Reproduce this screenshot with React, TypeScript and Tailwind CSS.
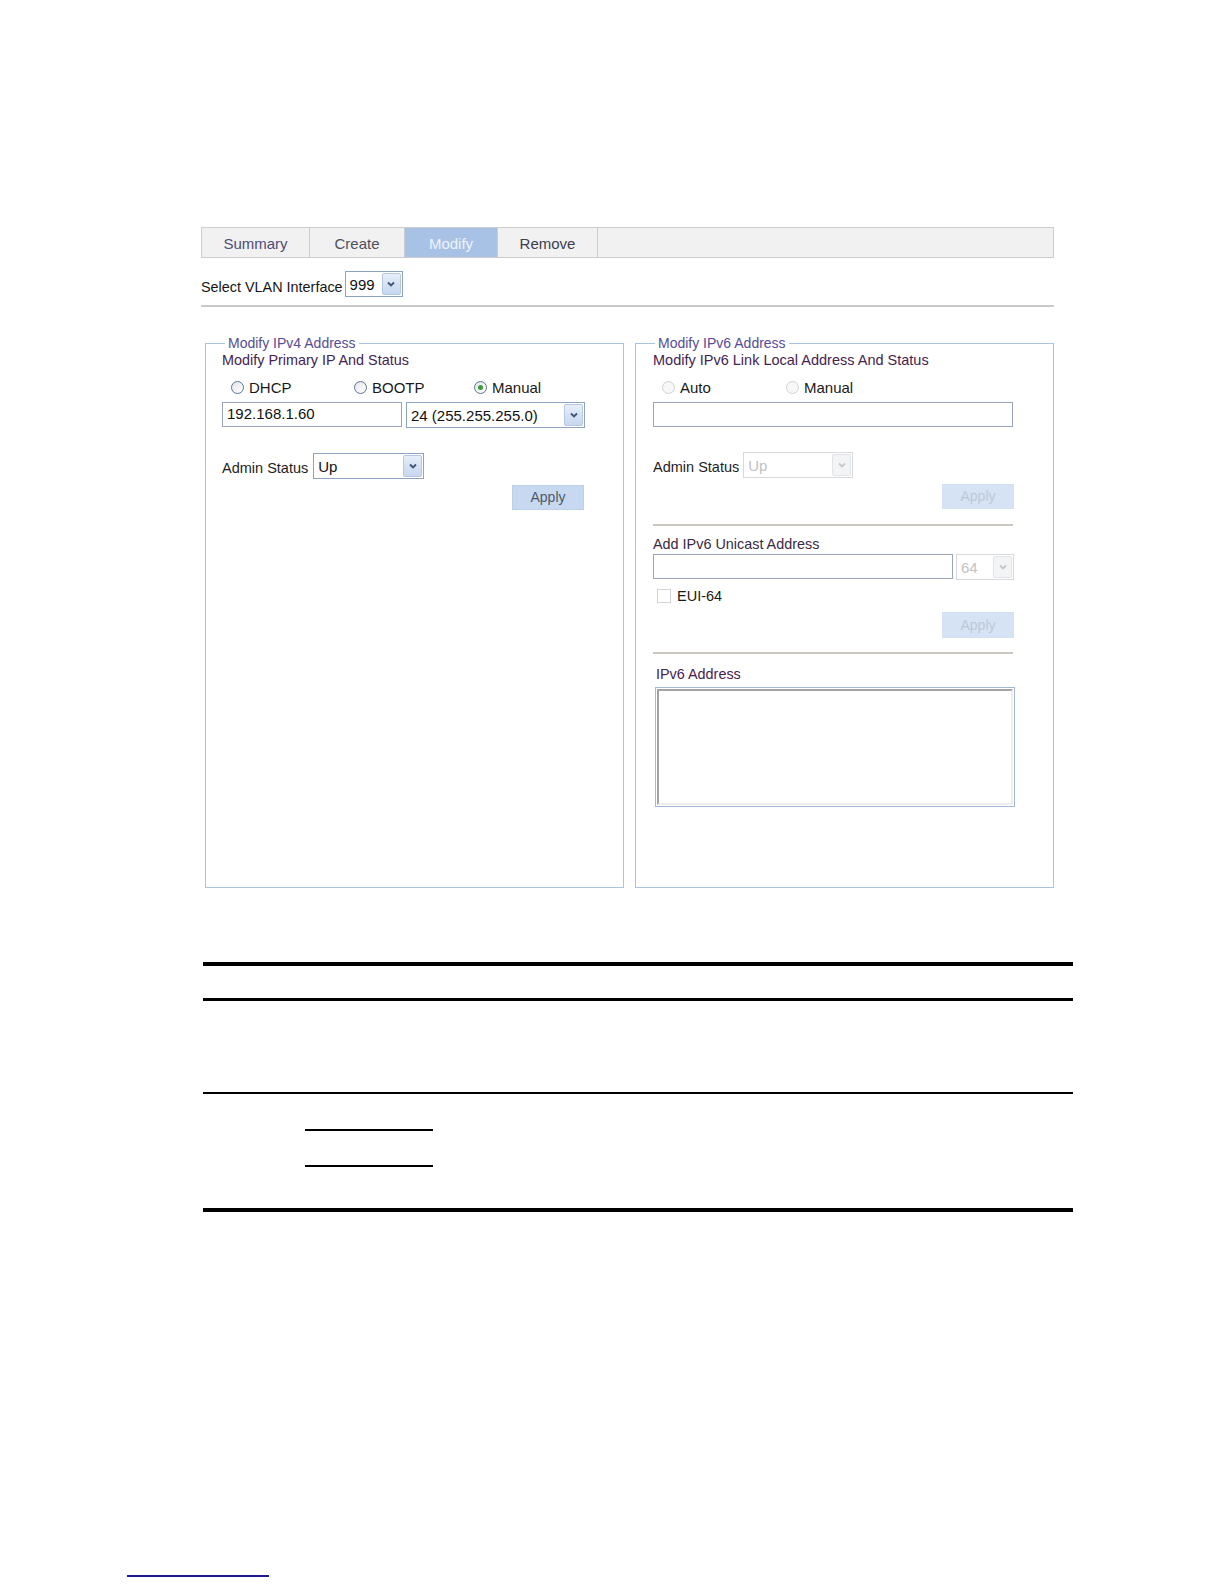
import React from "react";

const font = "font-['Liberation_Sans',Arial,sans-serif]";

const Chevron = ({ disabled }: { disabled?: boolean }) => (
  <svg width="10" height="8" viewBox="0 0 10 8">
    <path
      d="M2 2.5 L5 5.5 L8 2.5"
      fill="none"
      stroke={disabled ? "#c4c8ce" : "#3f5478"}
      strokeWidth="1.9"
    />
  </svg>
);

// select box with the little blue arrow button on the right
const SelectBox = ({
  value,
  className,
  disabled,
}: {
  value: string;
  className: string;
  disabled?: boolean;
}) => (
  <div
    className={`flex h-[26px] items-stretch border bg-white ${className} ${
      disabled ? "border-[#d6d9de] text-[#c2c2c2]" : "border-[#8ea3bf] text-[#111]"
    }`}
  >
    <span className="flex flex-1 items-center pl-[4px] text-[15px] leading-none">{value}</span>
    <span
      className={`m-[1px] flex w-[19px] items-center justify-center rounded-[2px] border ${
        disabled
          ? "border-[#e2e4e8] bg-[#f3f4f6]"
          : "border-[#b6c8e2] bg-gradient-to-b from-[#e6eef9] to-[#c6d7ef]"
      }`}
    >
      <Chevron disabled={disabled} />
    </span>
  </div>
);

const Radio = ({
  label,
  checked,
  disabled,
  className,
}: {
  label: string;
  checked?: boolean;
  disabled?: boolean;
  className?: string;
}) => (
  <div className={`flex items-center ${className ?? ""}`}>
    <span
      className={`flex h-[13px] w-[13px] items-center justify-center rounded-full border ${
        disabled
          ? "border-[#cfd3d8] bg-[#f7f7f7]"
          : "border-[#5f7290] bg-gradient-to-br from-[#e2e6ea] to-white"
      }`}
    >
      {checked && <span className="h-[5px] w-[5px] rounded-full bg-[#3c9c3c]" />}
    </span>
    <span className="ml-[5px] text-[15px] leading-none text-[#1a1a1a]">{label}</span>
  </div>
);

const ApplyButton = ({ disabled, className }: { disabled?: boolean; className?: string }) => (
  <div
    className={`flex w-[72px] items-center justify-center border text-[14px] ${
      disabled
        ? "border-[#d3e0f0] bg-[#d6e3f4] text-[#bcc8d9]"
        : "border-[#bcd0ea] bg-[#c7d9f0] text-[#4e5a6a]"
    } ${className ?? ""}`}
  >
    Apply
  </div>
);

const TextInput = ({ value, className }: { value?: string; className: string }) => (
  <div
    className={`flex h-[25px] items-center border border-[#9aa5b3] bg-white pl-[4px] text-[15px] text-[#111] ${className}`}
  >
    {value}
  </div>
);

const tabs = [
  { label: "Summary", w: "w-[108px]", color: "text-[#4d4d78]" },
  { label: "Create", w: "w-[95px]", color: "text-[#4f4f5f]" },
  { label: "Modify", w: "w-[93px]", color: "text-[#eef3fa]", active: true },
  { label: "Remove", w: "w-[100px]", color: "text-[#3e3e4e]" },
];

export default function App() {
  return (
    <div className={`min-h-[1584px] w-[1224px] bg-white ${font}`}>
      <div className="ml-[201px] w-[853px] pt-[227px]">
        {/* tab strip */}
        <div className="flex h-[31px] border border-[#cdcdcd] bg-[#f1f1f1]">
          {tabs.map((t) => (
            <div
              key={t.label}
              className={`flex items-center justify-center border-r border-[#cdcdcd] pt-[3px] text-[15px] ${t.w} ${t.color} ${
                t.active ? "bg-[#a8c2e6]" : ""
              }`}
            >
              {t.label}
            </div>
          ))}
        </div>

        <div className="mt-[13px] flex h-[26px] items-center">
          <span className="pt-[6px] text-[14.4px] leading-[17px] text-[#161616]">Select VLAN Interface</span>
          <SelectBox value="999" className="ml-[2px] w-[58px]" />
        </div>

        <div className="mt-[8px] h-[2px] bg-[#c9c9c9]" />

        <div className="mt-[28px] flex gap-[11px] pl-[4px]">
          {/* IPv4 */}
          <fieldset className="h-[553px] w-[419px] border border-[#aac3e2] pl-[16px]">
            <legend className="ml-[3px] px-[3px] text-[14px] leading-[17px] text-[#574c96]">
              Modify IPv4 Address
            </legend>
            <div className="text-[14.4px] leading-[17px] text-[#45234f]">Modify Primary IP And Status</div>
            <div className="mt-[8px] flex h-[20px] items-center pl-[9px]">
              <Radio label="DHCP" className="w-[123px]" />
              <Radio label="BOOTP" className="w-[120px]" />
              <Radio label="Manual" checked />
            </div>
            <div className="mt-[5px] flex gap-[4px]">
              <TextInput value="192.168.1.60" className="w-[180px]" />
              <SelectBox value="24 (255.255.255.0)" className="h-[25px] w-[179px]" />
            </div>
            <div className="mt-[25px] flex h-[26px] items-center">
              <span className="pt-[5px] text-[14.5px] leading-[17px] text-[#1e1e1e]">Admin Status</span>
              <SelectBox value="Up" className="ml-[5px] w-[111px]" />
            </div>
            <ApplyButton className="ml-[290px] mt-[6px] h-[25px]" />
          </fieldset>

          {/* IPv6 */}
          <fieldset className="h-[553px] w-[419px] border border-[#aac3e2] pl-[17px]">
            <legend className="ml-[2px] px-[3px] text-[14px] leading-[17px] text-[#574c96]">
              Modify IPv6 Address
            </legend>
            <div className="text-[14.5px] leading-[17px] text-[#45234f]">
              Modify IPv6 Link Local Address And Status
            </div>
            <div className="mt-[8px] flex h-[20px] items-center pl-[9px]">
              <Radio label="Auto" disabled className="w-[124px]" />
              <Radio label="Manual" disabled />
            </div>
            <TextInput className="mt-[5px] w-[360px]" />
            <div className="mt-[25px] flex h-[26px] items-center">
              <span className="pt-[5px] text-[14.5px] leading-[17px] text-[#1e1e1e]">Admin Status</span>
              <SelectBox value="Up" disabled className="ml-[4px] w-[110px]" />
            </div>
            <ApplyButton disabled className="ml-[289px] mt-[6px] h-[25px]" />
            <div className="mt-[15px] h-[2px] w-[360px] bg-[#cbc8bf]" />

            <div className="mt-[10px] text-[14.4px] leading-[17px] text-[#3a2a44]">Add IPv6 Unicast Address</div>
            <div className="mt-[1px] flex gap-[3px]">
              <TextInput className="w-[300px]" />
              <SelectBox value="64" disabled className="h-[25px] w-[58px]" />
            </div>
            <div className="mt-[7px] flex h-[18px] items-center pl-[4px]">
              <span className="h-[14px] w-[14px] border border-[#cfd3d8] bg-white" />
              <span className="ml-[6px] text-[14.5px] leading-[17px] text-[#1a1a1a]">EUI-64</span>
            </div>
            <ApplyButton disabled className="ml-[289px] mt-[7px] h-[26px]" />
            <div className="mt-[14px] h-[2px] w-[360px] bg-[#cbc8bf]" />

            <div className="ml-[3px] mt-[12px] text-[14.4px] leading-[17px] text-[#4a2350]">IPv6 Address</div>
            <div className="ml-[2px] mt-[4px] h-[120px] w-[360px] border border-[#a3b9d6] bg-white p-[1px]">
              <div className="h-full w-full border-2 border-b-[#eeeeee] border-l-[#a3a3a3] border-r-[#eeeeee] border-t-[#a3a3a3]" />
            </div>
          </fieldset>
        </div>
      </div>

      {/* empty document table rules */}
      <div className="ml-[203px] w-[870px]">
        <div className="mt-[74px] h-[4px] bg-black" />
        <div className="mt-[32px] h-[3px] bg-black" />
        <div className="mt-[91px] h-[2px] bg-black" />
        <div className="ml-[102px] mt-[35px] h-[2px] w-[128px] bg-black" />
        <div className="ml-[102px] mt-[34px] h-[2px] w-[128px] bg-black" />
        <div className="mt-[41px] h-[4px] bg-black" />
      </div>

      <div className="ml-[127px] mt-[363px] h-[2px] w-[142px] bg-[#1c1c8f]" />
    </div>
  );
}
